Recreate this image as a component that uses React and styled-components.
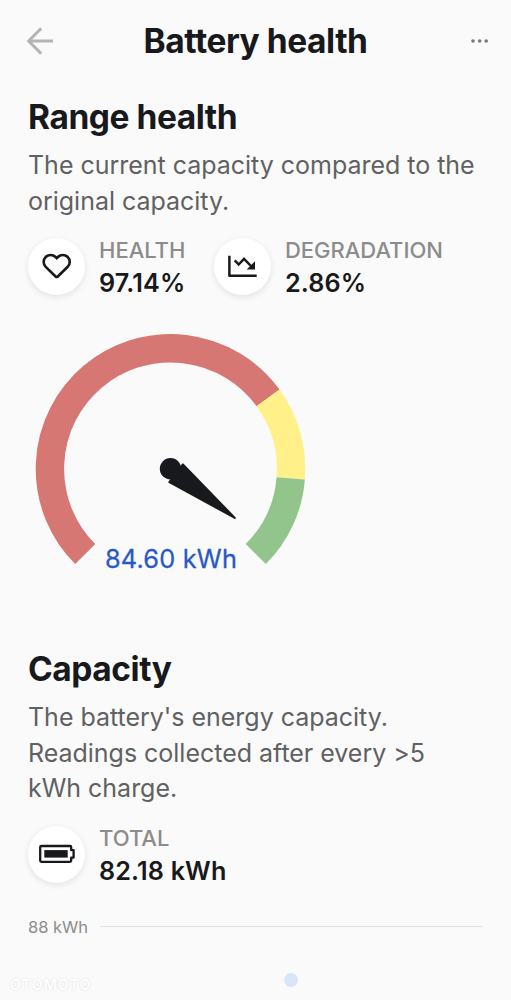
import styled, { createGlobalStyle } from "styled-components";

const GlobalStyles = createGlobalStyle`
  * {
    box-sizing: border-box;
    margin: 0;
    padding: 0;
  }

  body {
    background-color: #fafafa;
    font-family: Inter, sans-serif;
    color: #18191c;
  }
`;

const Page = styled.div`
  width: 511px;
  height: 1000px;
  padding: 0 28px;
  position: relative;
  overflow: hidden;
`;

const Header = styled.header`
  height: 82px;
  display: flex;
  align-items: center;
  justify-content: space-between;
  margin: 0 -5px;

  svg {
    margin-bottom: 1px;
  }
`;

const Title = styled.h1`
  font-size: 33.5px;
  line-height: 40px;
  font-weight: 700;
  letter-spacing: -0.45px;
  white-space: nowrap;
`;

const Section = styled.section`
  padding-top: ${(props) => props.$top}px;
`;

const Heading = styled.h2`
  font-size: 33.5px;
  line-height: 40px;
  font-weight: 700;
  letter-spacing: -0.45px;
`;

const Text = styled.p`
  margin-top: 11px;
  font-size: 25px;
  line-height: 35.5px;
  letter-spacing: -0.02px;
  color: #606162;
  white-space: nowrap;
`;

const Stats = styled.div`
  display: flex;
  gap: 28.5px;
  margin-top: 16px;
`;

const StatItem = styled.div`
  display: flex;
  align-items: center;
  gap: 14px;
`;

const StatIcon = styled.div`
  width: 57px;
  height: 57px;
  margin-bottom: 3px;
  border-radius: 50%;
  background-color: #fff;
  box-shadow: 0 2px 6px rgba(0, 0, 0, 0.1);

  svg {
    display: block;
  }
`;

const StatLabel = styled.div`
  font-size: 22px;
  line-height: 31px;
  font-weight: 500;
  color: #8c8c8c;
`;

const StatValue = styled.div`
  font-size: 25.2px;
  line-height: 35px;
  font-weight: 600;
  letter-spacing: 0.15px;
`;

const GaugeChart = styled.svg`
  display: block;
  width: 285px;
  height: 300px;
  margin-top: -1px;
`;

const GaugeReading = styled.text`
  font-size: 25.3px;
  letter-spacing: 0.2px;
  text-anchor: middle;
  fill: #2859c5;
  stroke: #2859c5;
  stroke-width: 0.3px;
`;

const AxisRow = styled.div`
  display: flex;
  align-items: center;
  gap: 11px;
  margin-top: 28px;
`;

const AxisLabel = styled.span`
  width: 61px;
  font-size: 16.5px;
  line-height: 20px;
  color: #8c8c8c;
  white-space: nowrap;
`;

const AxisLine = styled.div`
  flex: 1;
  height: 1px;
  background-color: #e2e2e2;
`;

const DataPoint = styled.div`
  position: absolute;
  left: 284px;
  top: 973px;
  width: 14px;
  height: 14px;
  border-radius: 50%;
  background-color: #d9e6f7;
`;

const Watermark = styled.div`
  position: absolute;
  left: 10px;
  top: 976px;
  font-size: 14px;
  line-height: 18px;
  font-weight: 700;
  letter-spacing: 1.2px;
  color: #fefefe;
  text-shadow: 0 0 2px rgba(0, 0, 0, 0.14);
`;

function BackIcon() {
  return (
    <svg width="32" height="34" fill="none" stroke="#b4b4b4" strokeWidth="2.9">
      <path d="M18.2 4.4 5.6 17l12.6 12.6M5.6 17H30" />
    </svg>
  );
}

function MoreIcon() {
  return (
    <svg width="32" height="34" fill="#777">
      <circle cx="17" cy="17" r="1.8" />
      <circle cx="23.7" cy="17" r="1.8" />
      <circle cx="30.2" cy="17" r="1.8" />
    </svg>
  );
}

function HeartIcon() {
  return (
    <svg width="57" height="57" fill="none" stroke="#18191c" strokeWidth="2.6">
      <path d="M28.7 20.2 27.5 19A6.9 6.9 0 0 0 17.7 28.8L27.6 38.5Q28.7 39.6 29.8 38.5L39.7 28.8A6.9 6.9 0 0 0 29.9 19Z" />
    </svg>
  );
}

function DeclineIcon() {
  return (
    <svg width="57" height="57" fill="none" stroke="#18191c" strokeWidth="2.5">
      <path d="M15.4 17.7V37.7H42.7" strokeLinejoin="round" />
      <path d="M20.7 22.3 24.7 26.5 30 20.8 37.5 28.5" />
      <path d="M41 23.2V31.5H32.7Z" fill="#18191c" stroke="none" />
    </svg>
  );
}

function BatteryIcon() {
  return (
    <svg width="57" height="57" fill="none" stroke="#18191c" strokeWidth="2.3">
      <path
        d="M13.4 20H42Q43.2 20 43.2 21.2V24.2H45.6V31.6H43.2V34.6Q43.2 35.8 42 35.8H13.4Q12.2 35.8 12.2 34.6V21.2Q12.2 20 13.4 20Z"
        strokeLinejoin="round"
      />
      <path d="M16.3 24.1H39.7V31.6H16.3Z" fill="#18191c" stroke="none" />
    </svg>
  );
}

function Stat({ icon, label, value }) {
  return (
    <StatItem>
      <StatIcon>{icon}</StatIcon>
      <div>
        <StatLabel>{label}</StatLabel>
        <StatValue>{value}</StatValue>
      </div>
    </StatItem>
  );
}

const CX = 142.5;
const CY = 168.8;
const RADIUS = 120.6;

const zones = [
  { from: 225, to: 36, color: "#d67774" },
  { from: 36, to: -4.5, color: "#fff08a" },
  { from: -4.5, to: -45, color: "#92c58c" },
];

function point(angle) {
  const rad = (angle * Math.PI) / 180;
  return `${CX + RADIUS * Math.cos(rad)} ${CY - RADIUS * Math.sin(rad)}`;
}

function Gauge({ reading }) {
  return (
    <GaugeChart viewBox="0 0 285 300">
      {zones.map(({ from, to, color }) => (
        <path
          key={color}
          d={`M${point(from)}A${RADIUS} ${RADIUS} 0 ${from - to > 180 ? 1 : 0} 1 ${point(to)}`}
          fill="none"
          stroke={color}
          strokeWidth="28.4"
        />
      ))}
      <circle cx={CX} cy={CY} r="10.7" fill="#18191c" />
      <path
        d="M154.9 164.4 141.4 182.1 206.8 217.9Z"
        fill="#18191c"
        stroke="#18191c"
        strokeWidth="2"
        strokeLinejoin="round"
      />
      <GaugeReading x="143" y="268.4">
        {reading}
      </GaugeReading>
    </GaugeChart>
  );
}

function App() {
  return (
    <>
      <GlobalStyles />
      <Page>
        <Header>
          <BackIcon />
          <Title>Battery health</Title>
          <MoreIcon />
        </Header>

        <Section $top={15}>
          <Heading>Range health</Heading>
          <Text>
            The current capacity compared to the
            <br />
            original capacity.
          </Text>
          <Stats>
            <Stat icon={<HeartIcon />} label="HEALTH" value="97.14%" />
            <Stat icon={<DeclineIcon />} label="DEGRADATION" value="2.86%" />
          </Stats>
          <Gauge reading="84.60 kWh" />
        </Section>

        <Section $top={49}>
          <Heading>Capacity</Heading>
          <Text>
            The battery&apos;s energy capacity.
            <br />
            Readings collected after every &gt;5
            <br />
            kWh charge.
          </Text>
          <Stats>
            <Stat icon={<BatteryIcon />} label="TOTAL" value="82.18 kWh" />
          </Stats>
          <AxisRow>
            <AxisLabel>88 kWh</AxisLabel>
            <AxisLine />
          </AxisRow>
        </Section>

        <DataPoint />
        <Watermark>OTOMOTO</Watermark>
      </Page>
    </>
  );
}

export default App;
